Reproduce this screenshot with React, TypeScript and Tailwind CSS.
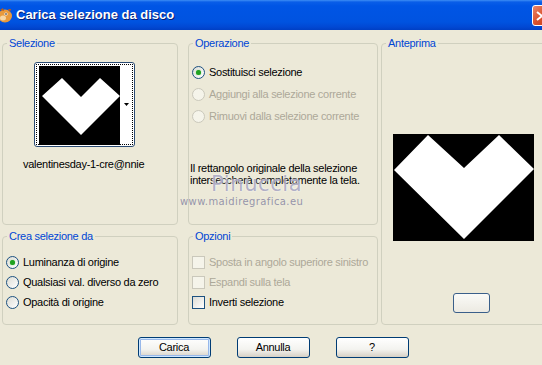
import React from "react";

const font = { fontFamily: '"Liberation Sans", Arial, sans-serif', letterSpacing: "-0.28px" };

function Radio({ checked, disabled }: { checked?: boolean; disabled?: boolean }) {
  return (
    <span
      className={
        "relative inline-flex h-[13px] w-[13px] shrink-0 items-center justify-center rounded-full border " +
        (disabled
          ? "border-[#cac8bb] bg-[#f5f4ea]"
          : "border-[#1c5180] bg-[linear-gradient(135deg,#dcdcd5,#ffffff)]")
      }
    >
      {checked && <span className="h-[5px] w-[5px] rounded-full bg-[#21a121] shadow-[0_0_1px_#55d055]" />}
    </span>
  );
}

function Check({ disabled }: { disabled?: boolean }) {
  return (
    <span
      className={
        "inline-block h-[13px] w-[13px] shrink-0 border " +
        (disabled
          ? "border-[#cac8bb] bg-[#f5f4ea]"
          : "border-[#1c5180] bg-[linear-gradient(135deg,#dcdcd5,#ffffff)]")
      }
    />
  );
}

function Group({
  title,
  className,
  children,
}: {
  title: string;
  className?: string;
  children?: React.ReactNode;
}) {
  return (
    <fieldset className={"min-w-0 rounded-[4px] border border-[#d0d0bf] " + (className ?? "")}>
      <legend className="ml-[4px] px-[2px] text-[11px] leading-[13px] text-[#0046d5]">{title}</legend>
      {children}
    </fieldset>
  );
}

function XPButton({
  label,
  isDefault,
  className,
}: {
  label: string;
  isDefault?: boolean;
  className?: string;
}) {
  return (
    <div
      className={
        "flex h-[21px] w-[73px] items-center justify-center rounded-[3px] border border-[#003c74] bg-[linear-gradient(#ffffff,#f3f3ef_60%,#d6d0c5)] text-[11px] text-black " +
        (isDefault ? "shadow-[inset_0_0_0_1px_#cee7ff,inset_0_0_0_2px_#98b8ea] " : "") +
        (className ?? "")
      }
    >
      {label}
    </div>
  );
}

export default function App() {
  return (
    <div className="relative h-[365px] w-[542px] overflow-hidden whitespace-nowrap bg-[#ece9d8] text-[11px] text-black" style={font}>
      {/* Title bar */}
      <div className="relative flex h-[30px] items-center bg-[linear-gradient(#3d8ef5_0px,#0a5ee8_2px,#0055e5_6px,#0053e0_22px,#0148d3_27px,#003fc4_30px)]">
        <svg width="14" height="16" viewBox="0 0 14 16" className="ml-0 mr-[2px] mt-[1px]">
          <ellipse cx="5" cy="8" rx="7" ry="6.5" fill="#e89a3c" />
          <ellipse cx="3" cy="10" rx="3" ry="2.5" fill="#f6d7a6" />
          <circle cx="6" cy="6" r="1.6" fill="#fff" />
          <circle cx="6" cy="6" r="0.8" fill="#000" />
          <path d="M0 2 L3 0 L4 3 Z" fill="#b85c1a" />
          <path d="M8 1 L11 1 L10 4 Z" fill="#b85c1a" />
        </svg>
        <span
          className="text-[13px] font-bold text-white [text-shadow:1px_1px_0_#0a1c70]"
          style={{ fontFamily: '"Liberation Sans", Arial, sans-serif', letterSpacing: "0px" }}
        >
          Carica selezione da disco
        </span>
        <div className="absolute right-[-12px] top-[5px] flex h-[21px] w-[22px] items-center justify-start rounded-[3px] border border-white bg-[linear-gradient(135deg,#e9866b,#d9502a_50%,#c43a1a)] pl-[3px]">
          <svg width="8" height="10" viewBox="0 0 8 10">
            <path d="M1 1 L6 5 L1 9" stroke="#fff" strokeWidth="2" fill="none" />
          </svg>
        </div>
      </div>

      {/* Body */}
      <div className="grid grid-cols-[176px_200px_173px] grid-rows-[188px_95px] gap-x-0 gap-y-[5px] pl-[2px] pt-[7px]">
        <Group title="Selezione" className="col-start-1 row-start-1">
          <div className="flex flex-col items-start">
            <div className="ml-[31px] mt-[12px] flex h-[85px] w-[101px] items-center rounded-[3px] border border-[#2a4a72] bg-white p-[1px]">
              <div className="flex h-full w-full border border-dotted border-black">
                <div className="ml-[2px] mt-[1px] h-[79px] w-[81px] bg-black">
                  <svg width="81" height="79" viewBox="0 0 81 79">
                    <polygon points="3,30 23,12 42,31 61,12 81,30 42,69" fill="#fff" />
                  </svg>
                </div>
                <div className="flex flex-1 items-center justify-center">
                  <svg width="5" height="3" viewBox="0 0 5 3">
                    <polygon points="0,0 5,0 2.5,3" fill="#000" />
                  </svg>
                </div>
              </div>
            </div>
            <div className="ml-[20px] mt-[9px] text-[11px]">valentinesday-1-cre@nnie</div>
          </div>
        </Group>

        <Group title="Operazione" className="col-start-2 row-start-1 ml-[10px]">
          <div className="flex flex-col gap-[9px] pl-[3px] pt-[16px] leading-[13px]">
            <div className="flex items-center gap-[4px]">
              <Radio checked />
              <span>Sostituisci selezione</span>
            </div>
            <div className="flex items-center gap-[4px] text-[#aca899]">
              <Radio disabled />
              <span>Aggiungi alla selezione corrente</span>
            </div>
            <div className="flex items-center gap-[4px] text-[#aca899]">
              <Radio disabled />
              <span>Rimuovi dalla selezione corrente</span>
            </div>
          </div>
          <div className="mt-[39px] pl-[1px] leading-[12px]">
            Il rettangolo originale della selezione
            <br />
            interseccherà completamente la tela.
          </div>
        </Group>

        <Group title="Anteprima" className="col-start-3 row-span-2 row-start-1 ml-[3px]">
          <div className="flex flex-col items-start">
            <div className="ml-[11px] mt-[84px] h-[107px] w-[141px] bg-black">
              <svg width="141" height="107" viewBox="0 0 141 107">
                <polygon points="1,36 35,1 71,34 106,1 141,35 71,105" fill="#fff" />
              </svg>
            </div>
            <div className="ml-[71px] mt-[52px] h-[20px] w-[37px] rounded-[3px] border border-[#3a5f8a] bg-[linear-gradient(#fafaf7,#eceae2)]" />
          </div>
        </Group>

        <Group title="Crea selezione da" className="col-start-1 row-start-2">
          <div className="flex flex-col gap-[7px] pl-[3px] pt-[13px] leading-[13px]">
            <div className="flex items-center gap-[4px]">
              <Radio checked />
              <span>Luminanza di origine</span>
            </div>
            <div className="flex items-center gap-[4px]">
              <Radio />
              <span>Qualsiasi val. diverso da zero</span>
            </div>
            <div className="flex items-center gap-[4px]">
              <Radio />
              <span>Opacità di origine</span>
            </div>
          </div>
        </Group>

        <Group title="Opzioni" className="col-start-2 row-start-2 ml-[10px]">
          <div className="flex flex-col gap-[7px] pl-[3px] pt-[13px] leading-[13px]">
            <div className="flex items-center gap-[4px] text-[#aca899]">
              <Check disabled />
              <span>Sposta in angolo superiore sinistro</span>
            </div>
            <div className="flex items-center gap-[4px] text-[#aca899]">
              <Check disabled />
              <span>Espandi sulla tela</span>
            </div>
            <div className="flex items-center gap-[4px]">
              <Check />
              <span>Inverti selezione</span>
            </div>
          </div>
        </Group>
      </div>

      {/* Buttons */}
      <div className="mt-[12px] flex justify-center gap-[26px] pl-[4px]">
        <XPButton label="Carica" isDefault />
        <XPButton label="Annulla" />
        <XPButton label="?" />
      </div>

      {/* Watermark overlay */}
      <div className="pointer-events-none absolute left-[180px] top-[173px] flex flex-col items-start">
        <span
          className="ml-[31px] text-[21px] leading-[23px] text-[#9a98b8]/75 [text-shadow:0_0_2px_#fff]"
          style={{ fontFamily: '"DejaVu Sans", sans-serif', letterSpacing: "0.6px" }}
        >
          Pinuccia
        </span>
        <span className="text-[10px] leading-[11px] text-[#8b8aa5]/90" style={{ fontFamily: '"DejaVu Sans", sans-serif', letterSpacing: "0.4px" }}>
          www.maidiregrafica.eu
        </span>
      </div>
    </div>
  );
}
